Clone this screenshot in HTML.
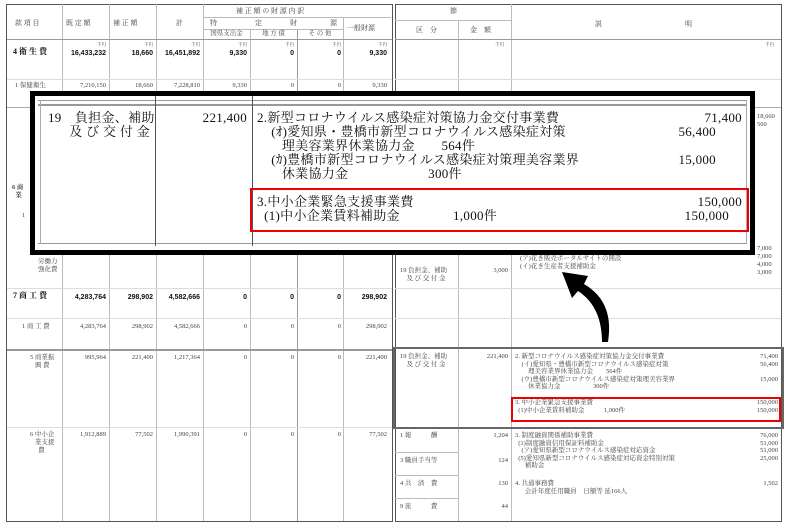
<!DOCTYPE html>
<html><head><meta charset="utf-8">
<style>
body{margin:0;width:800px;height:525px;background:#fff;position:relative;overflow:hidden;font-family:"Liberation Serif","Noto Serif CJK SC",serif;color:#222}
.a{position:absolute}
.h{position:absolute;height:1px;background:#bbb}
.v{position:absolute;width:1px;background:#bbb}
.s{position:absolute;font-size:6.5px;color:#444;white-space:nowrap;line-height:8px}
.b{position:absolute;font-size:7px;font-weight:bold;color:#111;white-space:nowrap;font-family:"Liberation Sans","Noto Sans CJK SC",sans-serif}
.r{text-align:right}
.c{text-align:center}
.o{position:absolute;font-size:13px;color:#111;white-space:nowrap;line-height:14px;letter-spacing:.3px}
</style></head><body>
<!-- left table -->
<div class="a" style="left:6px;top:4px;width:385px;height:516px;border:1.5px solid #555"></div>
<div class="v" style="left:62px;top:4px;height:517px"></div>
<div class="v" style="left:109px;top:4px;height:517px"></div>
<div class="v" style="left:156px;top:4px;height:517px"></div>
<div class="v" style="left:203px;top:4px;height:517px"></div>
<div class="v" style="left:250px;top:29px;height:492px"></div>
<div class="v" style="left:297px;top:29px;height:492px;background:#999"></div>
<div class="v" style="left:343px;top:17px;height:504px"></div>
<div class="h" style="left:203px;top:17px;width:188px"></div>
<div class="h" style="left:203px;top:29px;width:140px"></div>
<div class="h" style="left:7px;top:39px;width:385px;background:#999"></div>
<div class="h" style="left:7px;top:79px;width:385px;background:#ddd"></div>
<div class="h" style="left:7px;top:107px;width:385px;background:#aaa"></div>
<div class="h" style="left:7px;top:288px;width:385px;background:#ddd"></div>
<div class="h" style="left:7px;top:318px;width:385px;background:#ddd"></div>
<div class="h" style="left:7px;top:349px;width:385px;height:2px;background:#999"></div>
<div class="h" style="left:7px;top:427px;width:385px;background:#ddd"></div>
<div class="s" style="left:15px;top:19px;font-size:7px">款 項 目</div>
<div class="s" style="left:66px;top:19px;font-size:7px">既 定 額</div>
<div class="s" style="left:113px;top:19px;font-size:7px">補 正 額</div>
<div class="s" style="left:176px;top:19px;font-size:7px">計</div>
<div class="s" style="left:236px;top:7px;font-size:7px">補 正 額 の 財 源 内 訳</div>
<div class="s" style="left:210px;top:19px;font-size:7px">特</div>
<div class="s" style="left:255px;top:19px;font-size:7px">定</div>
<div class="s" style="left:290px;top:19px;font-size:7px">財</div>
<div class="s" style="left:330px;top:19px;font-size:7px">源</div>
<div class="s c" style="left:203px;width:47px;top:30px;font-size:6.5px">国県支出金</div>
<div class="s c" style="left:250px;width:47px;top:30px;font-size:6.5px">地 方 債</div>
<div class="s c" style="left:297px;width:46px;top:30px;font-size:6.5px">そ の 他</div>
<div class="s" style="left:347px;top:24px;font-size:7px">一般財源</div>
<div class="s" style="left:13px;top:48px;font-size:8px;font-weight:bold;color:#111">4 衛 生 費</div>
<div class="s r" style="left:62px;width:44px;top:41px;font-size:4.5px">千円</div>
<div class="s r" style="left:109px;width:44px;top:41px;font-size:4.5px">千円</div>
<div class="s r" style="left:156px;width:44px;top:41px;font-size:4.5px">千円</div>
<div class="s r" style="left:203px;width:44px;top:41px;font-size:4.5px">千円</div>
<div class="s r" style="left:250px;width:44px;top:41px;font-size:4.5px">千円</div>
<div class="s r" style="left:297px;width:44px;top:41px;font-size:4.5px">千円</div>
<div class="s r" style="left:343px;width:44px;top:41px;font-size:4.5px">千円</div>
<div class="b r" style="left:62px;width:44px;top:50px">16,433,232</div>
<div class="b r" style="left:109px;width:44px;top:50px">18,660</div>
<div class="b r" style="left:156px;width:44px;top:50px">16,451,892</div>
<div class="b r" style="left:203px;width:44px;top:50px">9,330</div>
<div class="b r" style="left:250px;width:44px;top:50px">0</div>
<div class="b r" style="left:297px;width:44px;top:50px">0</div>
<div class="b r" style="left:343px;width:44px;top:50px">9,330</div>
<div class="s" style="left:15px;top:82px">1 保健衛生</div>
<div class="s r" style="left:62px;width:44px;top:82px">7,210,150</div>
<div class="s r" style="left:109px;width:44px;top:82px">18,660</div>
<div class="s r" style="left:156px;width:44px;top:82px">7,228,810</div>
<div class="s r" style="left:203px;width:44px;top:82px">9,330</div>
<div class="s r" style="left:250px;width:44px;top:82px">0</div>
<div class="s r" style="left:297px;width:44px;top:82px">0</div>
<div class="s r" style="left:343px;width:44px;top:82px">9,330</div>
<div class="s" style="left:12px;top:184px;font-weight:bold">6 商<br>&nbsp;&nbsp;業</div>
<div class="s" style="left:22px;top:212px">1</div>
<div class="s" style="left:38px;top:258px">労働力<br>強化費</div>
<div class="s" style="left:13px;top:292px;font-size:8px;font-weight:bold;color:#111">7 商 工 費</div>
<div class="b r" style="left:62px;width:44px;top:294px">4,283,764</div>
<div class="b r" style="left:109px;width:44px;top:294px">298,902</div>
<div class="b r" style="left:156px;width:44px;top:294px">4,582,666</div>
<div class="b r" style="left:203px;width:44px;top:294px">0</div>
<div class="b r" style="left:250px;width:44px;top:294px">0</div>
<div class="b r" style="left:297px;width:44px;top:294px">0</div>
<div class="b r" style="left:343px;width:44px;top:294px">298,902</div>
<div class="s" style="left:22px;top:323px">1 商 工 費</div>
<div class="s r" style="left:62px;width:44px;top:323px">4,283,764</div>
<div class="s r" style="left:109px;width:44px;top:323px">298,902</div>
<div class="s r" style="left:156px;width:44px;top:323px">4,582,666</div>
<div class="s r" style="left:203px;width:44px;top:323px">0</div>
<div class="s r" style="left:250px;width:44px;top:323px">0</div>
<div class="s r" style="left:297px;width:44px;top:323px">0</div>
<div class="s r" style="left:343px;width:44px;top:323px">298,902</div>
<div class="s" style="left:30px;top:354px">5 商業振<br>&nbsp;&nbsp;&nbsp;興 費</div>
<div class="s r" style="left:62px;width:44px;top:354px">995,964</div>
<div class="s r" style="left:109px;width:44px;top:354px">221,400</div>
<div class="s r" style="left:156px;width:44px;top:354px">1,217,364</div>
<div class="s r" style="left:203px;width:44px;top:354px">0</div>
<div class="s r" style="left:250px;width:44px;top:354px">0</div>
<div class="s r" style="left:297px;width:44px;top:354px">0</div>
<div class="s r" style="left:343px;width:44px;top:354px">221,400</div>
<div class="s" style="left:30px;top:431px">6 中小企<br>&nbsp;&nbsp;&nbsp;業支援<br>&nbsp;&nbsp;&nbsp;&nbsp;&nbsp;費</div>
<div class="s r" style="left:62px;width:44px;top:431px">1,912,889</div>
<div class="s r" style="left:109px;width:44px;top:431px">77,502</div>
<div class="s r" style="left:156px;width:44px;top:431px">1,990,391</div>
<div class="s r" style="left:203px;width:44px;top:431px">0</div>
<div class="s r" style="left:250px;width:44px;top:431px">0</div>
<div class="s r" style="left:297px;width:44px;top:431px">0</div>
<div class="s r" style="left:343px;width:44px;top:431px">77,502</div>

<!-- right table -->
<div class="a" style="left:395px;top:4px;width:385px;height:516px;border:1.5px solid #555"></div>
<div class="v" style="left:458px;top:20px;height:501px"></div>
<div class="v" style="left:511px;top:4px;height:517px"></div>
<div class="h" style="left:395px;top:20px;width:116px"></div>
<div class="h" style="left:395px;top:39px;width:386px;background:#999"></div>
<div class="h" style="left:395px;top:79px;width:386px;background:#ddd"></div>
<div class="h" style="left:395px;top:107px;width:386px;background:#aaa"></div>
<div class="h" style="left:395px;top:288px;width:386px;background:#ddd"></div>
<div class="h" style="left:395px;top:318px;width:386px;background:#ddd"></div>
<div class="h" style="left:395px;top:452px;width:63px"></div>
<div class="h" style="left:395px;top:475px;width:63px"></div>
<div class="h" style="left:395px;top:498px;width:63px"></div>
<div class="s" style="left:450px;top:7px;font-size:7px">節</div>
<div class="s" style="left:416px;top:26px;font-size:7px">区　分</div>
<div class="s" style="left:470px;top:26px;font-size:7px">金　額</div>
<div class="s" style="left:595px;top:20px;font-size:7px">説</div>
<div class="s" style="left:685px;top:20px;font-size:7px">明</div>
<div class="s" style="left:495px;top:41px;font-size:4.5px">千円</div>
<div class="s" style="left:765px;top:41px;font-size:4.5px">千円</div>
<div class="s" style="left:757px;top:113px">18,660<br>560</div>
<div class="s" style="left:757px;top:245px">7,000<br>7,000<br>4,000<br>3,000</div>
<div class="s" style="left:400px;top:267px">19 負担金、補助<br>&nbsp;&nbsp;&nbsp;&nbsp;及 び 交 付 金</div>
<div class="s r" style="left:458px;width:50px;top:267px">3,000</div>
<div class="s" style="left:520px;top:255px">(ア)花き販売ポータルサイトの開設<br>(イ)花き生産者支援補助金</div>
<div class="a" style="left:393px;top:347px;width:387px;height:78px;border:2px solid #666"></div>
<div class="s" style="left:400px;top:353px">19 負担金、補助<br>&nbsp;&nbsp;&nbsp;&nbsp;及 び 交 付 金</div>
<div class="s r" style="left:458px;width:50px;top:353px">221,400</div>
<div class="s" style="left:515px;top:353px;line-height:7.6px">2. 新型コロナウイルス感染症対策協力金交付事業費<br>&nbsp;&nbsp;&nbsp;&nbsp;(イ)愛知県・豊橋市新型コロナウイルス感染症対策<br>&nbsp;&nbsp;&nbsp;&nbsp;&nbsp;&nbsp;&nbsp;&nbsp;理美容業界休業協力金　　564件<br>&nbsp;&nbsp;&nbsp;&nbsp;(ウ)豊橋市新型コロナウイルス感染症対策理美容業界<br>&nbsp;&nbsp;&nbsp;&nbsp;&nbsp;&nbsp;&nbsp;&nbsp;休業協力金　　　　　300件</div>
<div class="s r" style="left:730px;width:48px;top:353px;line-height:7.6px">71,400<br>56,400<br><br>15,000</div>
<div class="a" style="left:511px;top:397px;width:266px;height:21px;border:2px solid #e00"></div>
<div class="s" style="left:515px;top:399px">3. 中小企業緊急支援事業費<br>&nbsp;&nbsp;(1)中小企業賃料補助金　　　1,000件</div>
<div class="s r" style="left:730px;width:48px;top:399px">150,000<br>150,000</div>
<div class="s" style="left:400px;top:432px">1 報　　　酬</div><div class="s r" style="left:458px;width:50px;top:432px">1,204</div>
<div class="s" style="left:400px;top:457px">3 職員手当等</div><div class="s r" style="left:458px;width:50px;top:457px">124</div>
<div class="s" style="left:400px;top:480px">4 共　済　費</div><div class="s r" style="left:458px;width:50px;top:480px">130</div>
<div class="s" style="left:400px;top:503px">9 旅　　　費</div><div class="s r" style="left:458px;width:50px;top:503px">44</div>
<div class="s" style="left:515px;top:432px;line-height:7.6px">3. 制度融資関係補助事業費<br>&nbsp;&nbsp;(1)制度融資信用保証料補助金<br>&nbsp;&nbsp;&nbsp;&nbsp;(ア)愛知県新型コロナウイルス感染症対応資金<br>&nbsp;&nbsp;(5)愛知県新型コロナウイルス感染症対応資金特別対策<br>&nbsp;&nbsp;&nbsp;&nbsp;&nbsp;&nbsp;補助金</div>
<div class="s r" style="left:730px;width:48px;top:432px;line-height:7.6px">76,000<br>51,000<br>51,000<br>25,000</div>
<div class="s" style="left:515px;top:480px">4. 共通事務費<br>&nbsp;&nbsp;&nbsp;&nbsp;&nbsp;&nbsp;会計年度任用職員　日額等 延166人</div>
<div class="s r" style="left:730px;width:48px;top:480px">1,502</div>

<!-- arrow -->
<svg class="a" style="left:540px;top:262px" width="90" height="85" viewBox="0 0 90 85">
<path d="M68 80 C72 55 66 35 44 22 L48 14 L22 10 L32 36 L38 29 C55 40 62 58 62 80 Z" fill="#000"/>
</svg>

<!-- overlay -->
<div class="a" style="left:30px;top:91px;width:715px;height:154px;border:5px solid #000;background:#fff"></div>
<div class="h" style="left:38px;top:100px;width:709px;background:#999"></div>
<div class="h" style="left:38px;top:104px;width:709px;height:2px;background:#999"></div>
<div class="h" style="left:38px;top:243px;width:709px;background:#999"></div>
<div class="v" style="left:40px;top:100px;height:144px;background:#aaa"></div>
<div class="v" style="left:746px;top:100px;height:144px;background:#aaa"></div>
<div class="v" style="left:155px;top:96px;height:150px;background:#555"></div>
<div class="v" style="left:252px;top:96px;height:150px;background:#555"></div>
<div class="o" style="left:48px;top:111px">19　負担金、補助<br>&nbsp;&nbsp;&nbsp;&nbsp;&nbsp;&nbsp;及 び 交 付 金</div>
<div class="o r" style="left:155px;width:92px;top:111px">221,400</div>
<div class="o" style="left:257px;top:111px">2.新型コロナウイルス感染症対策協力金交付事業費<br>&nbsp;&nbsp;&nbsp;&nbsp;(ｵ)愛知県・豊橋市新型コロナウイルス感染症対策<br>&nbsp;&nbsp;&nbsp;&nbsp;&nbsp;&nbsp;&nbsp;理美容業界休業協力金　　564件<br>&nbsp;&nbsp;&nbsp;&nbsp;(ｶ)豊橋市新型コロナウイルス感染症対策理美容業界<br>&nbsp;&nbsp;&nbsp;&nbsp;&nbsp;&nbsp;&nbsp;休業協力金　　　　　　300件</div>
<div class="o r" style="left:660px;width:82px;top:111px">71,400</div>
<div class="o r" style="left:630px;width:86px;top:125px">56,400</div>
<div class="o r" style="left:630px;width:86px;top:153px">15,000</div>
<div class="a" style="left:250px;top:188px;width:495px;height:40px;border:2px solid #e00"></div>
<div class="o" style="left:257px;top:195px">3.中小企業緊急支援事業費<br>&nbsp;&nbsp;(1)中小企業賃料補助金　　　　1,000件</div>
<div class="o r" style="left:640px;width:102px;top:195px">150,000<br></div>
<div class="o r" style="left:620px;width:109px;top:209px">150,000</div>
</body></html>
